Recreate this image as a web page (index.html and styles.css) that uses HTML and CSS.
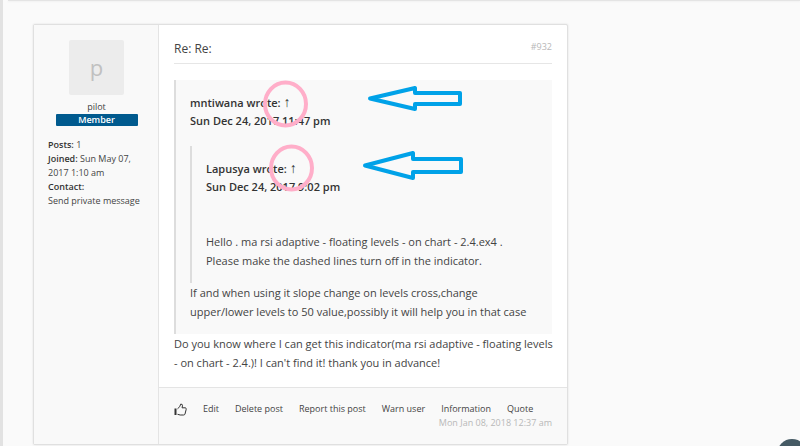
FILE: index.html
```html
<!DOCTYPE html>
<html lang="en">

<head>
    <meta charset="UTF-8">
    <title>Re: Re:</title>
    <link rel="stylesheet" href="styles.css">
</head>

<body>
    <div class="previous-post"></div>

    <main class="topic">
        <article class="post">
            <aside class="profile">
                <div class="avatar">p</div>
                <a class="username" href="#">pilot</a>
                <div class="rank">Member</div>
                <div class="details">
                    <div><strong>Posts:</strong> <a href="#">1</a></div>
                    <div><strong>Joined:</strong> Sun May 07, 2017 1:10 am</div>
                    <div><strong>Contact:</strong></div>
                    <div><a href="#">Send private message</a></div>
                </div>
            </aside>

            <div class="post-main">
                <div class="post-body">
                    <header class="post-header">
                        <h3><a href="#">Re: Re:</a></h3>
                        <a class="post-number" href="#">#932</a>
                    </header>

                    <div class="content">
                        <blockquote>
                            <cite>mntiwana wrote: <a href="#">↑</a><br>Sun Dec 24, 2017 11:47 pm</cite>
                            <blockquote class="nested">
                                <cite>Lapusya wrote: <a href="#">↑</a><br>Sun Dec 24, 2017 9:02 pm</cite>
                                <p class="spaced">Hello . ma rsi adaptive - floating levels - on chart - 2.4.ex4 .<br>Please make the dashed lines turn off in the indicator.</p>
                            </blockquote>
                            <p>If and when using it slope change on levels cross,change upper/lower levels to 50 value,possibly it will help you in that case</p>
                        </blockquote>
                        <p class="reply">Do you know where I can get this indicator(ma rsi adaptive - floating levels - on chart - 2.4.)! I can't find it! thank you in advance!</p>
                    </div>
                </div>

                <footer class="post-footer">
                    <div class="actions">
                        <button class="like" type="button" aria-label="Like">
                            <svg width="13" height="13" viewBox="0 0 13 13">
                                <path d="M3.5 5.8 L5.8 3.6 L6.6 1.2 Q8.6 .7 8.5 2.8 L8 4.8 H11.3 Q12.4 5 12.2 6.3 L11 11 Q10.7 12 9.6 12 H6.2 L3.5 11.3" />
                                <path class="cuff" d="M.5 5.5 H2.5 V12 H.5 Z" />
                            </svg>
                        </button>
                        <a href="#">Edit</a>
                        <a href="#">Delete post</a>
                        <a href="#">Report this post</a>
                        <a href="#">Warn user</a>
                        <a href="#">Information</a>
                        <a href="#">Quote</a>
                    </div>
                    <time>Mon Jan 08, 2018 12:37 am</time>
                </footer>
            </div>

            <!-- hand-drawn marks over the quotes -->
            <svg class="marks" width="535" height="200" viewBox="33 24 535 200">
                <g class="circles">
                    <ellipse cx="285.500" cy="104" rx="20.500" ry="21.500" />
                    <ellipse cx="291.500" cy="168" rx="20.500" ry="21.500" />
                </g>
                <g class="arrows">
                    <path d="M370 98.500 L415 88 V93 H460 V104 H415 V109 Z" />
                    <path d="M365 165.500 L413 153 V159 H461 V172 H413 V178 Z" />
                </g>
            </svg>
        </article>
    </main>

    <button class="to-top" type="button" aria-label="Back to top"></button>
</body>

</html>
```

FILE: styles.css
```css
* {
    box-sizing: border-box;
}

body {
    margin: 0;
    min-height: 100vh;
    overflow: hidden;
    background: #fafafa;
    border-left: 3px solid #e2e2e2;
    font-family: "Open Sans", sans-serif;
    font-size: 11px;
    line-height: 19px;
    color: #444;
}

a {
    color: inherit;
    text-decoration: none;
}

h3,
p,
blockquote {
    margin: 0;
}

.previous-post {
    height: 1px;
    margin-left: 5px;
    background: #e4e4e4;
    box-shadow: 0 1px 2px #eee;
}

.topic {
    padding: 23px 30px 0;
}

.post {
    position: relative;
    display: flex;
    max-width: 535px;
    background: #fff;
    border: 1px solid #e0e0e0;
    border-radius: 2px;
    box-shadow: 0 0 2px #ddd;
}

.profile {
    flex: none;
    width: 125px;
    padding: 15px 13px 15px 14px;
    background: #f9f9f9;
    border-right: 1px solid #e4e4e4;
    font-size: 9px;
    line-height: 14px;
    text-align: center;
}

.avatar {
    width: 55px;
    height: 55px;
    margin: 0 auto 5px;
    background: #ececec;
    border-radius: 2px;
    font-size: 22px;
    line-height: 55px;
    color: #c0c0c0;
}

.username {
    display: block;
}

.rank {
    width: 82px;
    margin: 0 auto;
    background: #005a8e;
    border-radius: 1px;
    color: #fff;
    font-weight: 600;
    line-height: 12px;
}

.details {
    margin-top: 12px;
    text-align: left;
}

strong {
    font-weight: 600;
    color: #333;
}

.post-main {
    flex: 1;
    min-width: 0;
}

.post-body {
    padding: 14px 15px 15px;
}

.post-header {
    display: flex;
    justify-content: space-between;
    padding-bottom: 5px;
    border-bottom: 1px solid #e6e6e6;
}

.post-header h3 {
    font-size: 12px;
    font-weight: 400;
}

.post-number {
    font-size: 9px;
    line-height: 16px;
    color: #b8b8b8;
}

.content {
    padding-top: 16px;
}

blockquote {
    padding: 14px 14px 13px;
    background: #f9f9f9;
    border-left: 2px solid #ddd;
}

.nested {
    margin-top: 16px;
}

.reply {
    margin-right: -4px;
}

cite {
    display: block;
    font-style: normal;
    font-weight: 600;
    line-height: 18px;
    color: #333;
}

cite a {
    font-family: "Liberation Sans", sans-serif;
    font-size: 14px;
    font-weight: 400;
    line-height: 12px;
}

.spaced {
    margin-top: 36px;
}

.post-footer {
    padding: 14px 15px;
    background: #f9f9f9;
    border-top: 1px solid #e4e4e4;
    font-size: 9px;
    line-height: 14px;
}

.actions {
    display: flex;
    align-items: center;
    gap: 16px;
    white-space: nowrap;
}

.like {
    display: flex;
    padding: 0;
    background: none;
    border: 0;
    cursor: pointer;
}

.like path {
    fill: none;
    stroke: #333;
}

.like .cuff {
    fill: #333;
    stroke: none;
}

.post-footer time {
    display: block;
    color: #b8b8b8;
    text-align: right;
}

.marks {
    position: absolute;
    top: -1px;
    left: -1px;
    fill: none;
    pointer-events: none;
}

.circles {
    stroke: #ffaec9;
    stroke-width: 4px;
}

.arrows {
    stroke: #00a2e8;
    stroke-width: 4px;
    stroke-linejoin: round;
}

.to-top {
    position: fixed;
    right: -7px;
    bottom: -23px;
    width: 30px;
    height: 30px;
    padding: 0;
    background: #455a64;
    border: 0;
    border-radius: 50%;
    cursor: pointer;
}
```
